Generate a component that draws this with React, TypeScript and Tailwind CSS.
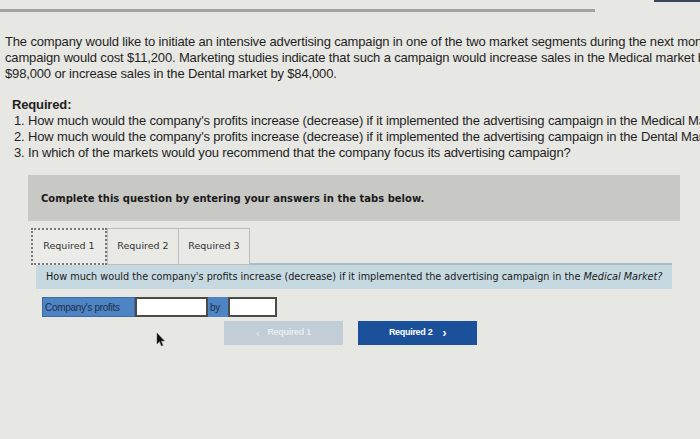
export default function App() {
  const body = "font-['Liberation_Sans',Arial,sans-serif]";
  const verd = "font-['DejaVu_Sans',Verdana,sans-serif]";
  return (
    <div className="relative w-[700px] h-[439px] overflow-hidden bg-[#e7e7e3] text-[#1f1f1f]">
      {/* top rule */}
      <div className="mt-[9px] h-[3px] w-[595px] bg-[#a3a3a3]" />
      <div className="absolute right-0 top-0 h-[2px] w-[46px] bg-[#3a4660]" />

      {/* problem text */}
      <div className={`${body} mt-[22px] pl-[5px] text-[13px] leading-[16px] whitespace-nowrap tracking-[-0.15px]`}>
        <p>The company would like to initiate an intensive advertising campaign in one of the two market segments during the next month.</p>
        <p>campaign would cost $11,200. Marketing studies indicate that such a campaign would increase sales in the Medical market by</p>
        <p>$98,000 or increase sales in the Dental market by $84,000.</p>
        <p className="mt-[15px] pl-[7px] font-bold">Required:</p>
        <ol className="pl-[9px]">
          <li>1. How much would the company's profits increase (decrease) if it implemented the advertising campaign in the Medical Market?</li>
          <li>2. How much would the company's profits increase (decrease) if it implemented the advertising campaign in the Dental Market?</li>
          <li>3. In which of the markets would you recommend that the company focus its advertising campaign?</li>
        </ol>
      </div>

      {/* instruction panel */}
      <div className={`${verd} ml-[28px] mt-[14px] w-[652px] h-[46px] bg-[#c8c8c5] flex items-center pl-[13px] text-[10px] font-bold text-[#1a1a1a]`}>
        Complete this question by entering your answers in the tabs below.
      </div>

      {/* tabs */}
      <div className={`${verd} ml-[31px] mt-[7px] flex text-[9.5px] text-[#333]`}>
        <div className="w-[76px] h-[37px] flex items-center justify-center border-2 border-dotted border-[#777] bg-[#ebebe8]">Required 1</div>
        <div className="w-[72px] h-[37px] flex items-center justify-center border border-[#bdbdbd] bg-[#e9e9e6]">Required 2</div>
        <div className="w-[71px] h-[37px] flex items-center justify-center border border-[#bdbdbd] border-l-0 bg-[#e9e9e6]">Required 3</div>
      </div>

      {/* question */}
      <div className={`${verd} ml-[36px] w-[636px] h-[26px] -mt-[2px] flex items-center pl-[10px] bg-[#c6d9e1] border-t-2 border-[#a9bcc6] text-[9.7px] text-[#1a1a1a] whitespace-nowrap`}>
        How much would the company's profits increase (decrease) if it implemented the advertising campaign in the&nbsp;<i>Medical Market?</i>
      </div>

      {/* answer row */}
      <div className={`${body} ml-[42px] mt-[8px] flex h-[20px] text-[10px] tracking-[-0.3px] text-[#1d2f4a]`}>
        <div className="w-[93px] bg-[#4e84c4] flex items-center pl-[2px] border border-[#3d6aa0]">Company's profits</div>
        <div className="w-[73px] bg-white border-2 border-[#4a4a4a]" />
        <div className="w-[20px] bg-[#4e84c4] flex items-center pl-[2px]">by</div>
        <div className="w-[49px] bg-white border-2 border-[#4a4a4a]" />
      </div>

      {/* nav buttons */}
      <div className={`${body} ml-[224px] mt-[4px] flex gap-[15px] text-[9px] font-bold tracking-[-0.3px]`}>
        <div className="w-[119px] h-[24px] bg-[#c1cdd7] flex items-center justify-center gap-[8px] text-[#e7edf2]">
          <span className="text-[11px] font-normal">&lsaquo;</span>
          <span>Required 1</span>
        </div>
        <div className="w-[119px] h-[24px] bg-[#1b509b] flex items-center justify-center gap-[10px] text-white">
          <span>Required 2</span>
          <span className="text-[12px]">&rsaquo;</span>
        </div>
      </div>

      {/* mouse cursor */}
      <svg className="absolute left-[156px] top-[332px]" width="10" height="16" viewBox="0 0 10 16">
        <path d="M1 1 L1 12 L3.5 9.5 L5.5 14 L7 13.3 L5 9 L8.5 9 Z" fill="#111" stroke="#555" strokeWidth="0.5" />
      </svg>
    </div>
  );
}
